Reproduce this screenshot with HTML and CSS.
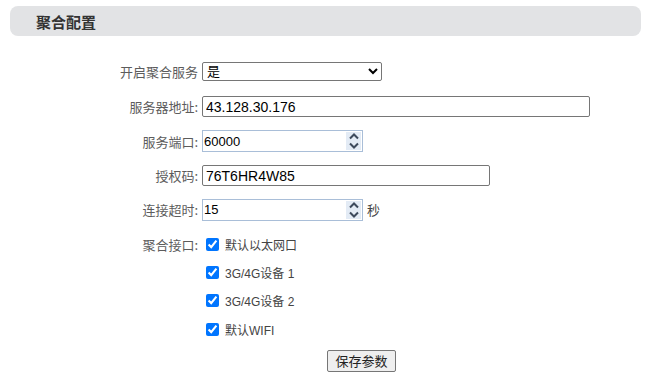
FILE: index.html
```html
<!DOCTYPE html>
<html lang="zh-CN">
<head>
    <meta charset="UTF-8">
    <meta name="viewport" content="width=device-width, initial-scale=1.0">
    <title>聚合配置</title>
    <link rel="stylesheet" href="styles.css">
</head>
<body>
    <div class="panel-title">
        <h2>聚合配置</h2>
    </div>

    <form class="config-form">
        <div class="row">
            <label class="field-label" for="enable">开启聚合服务</label>
            <select id="enable" class="select-box">
                <option selected>是</option>
                <option>否</option>
            </select>
        </div>

        <div class="row">
            <label class="field-label" for="server">服务器地址:</label>
            <input type="text" id="server" class="text-box wide" value="43.128.30.176">
        </div>

        <div class="row row-tight">
            <label class="field-label" for="port">服务端口:</label>
            <div class="number-box">
                <input type="number" id="port" value="60000">
                <span class="spinner">
                    <svg width="10" height="7" viewBox="0 0 10 7"><path d="M1 5.5 L5 1.5 L9 5.5" fill="none" stroke="#3d4a5c" stroke-width="2"/></svg>
                    <svg width="10" height="7" viewBox="0 0 10 7"><path d="M1 1.5 L5 5.5 L9 1.5" fill="none" stroke="#3d4a5c" stroke-width="2"/></svg>
                </span>
            </div>
        </div>

        <div class="row">
            <label class="field-label" for="auth">授权码:</label>
            <input type="text" id="auth" class="text-box medium" value="76T6HR4W85">
        </div>

        <div class="row row-loose">
            <label class="field-label" for="timeout">连接超时:</label>
            <div class="number-box">
                <input type="number" id="timeout" value="15">
                <span class="spinner">
                    <svg width="10" height="7" viewBox="0 0 10 7"><path d="M1 5.5 L5 1.5 L9 5.5" fill="none" stroke="#3d4a5c" stroke-width="2"/></svg>
                    <svg width="10" height="7" viewBox="0 0 10 7"><path d="M1 1.5 L5 5.5 L9 1.5" fill="none" stroke="#3d4a5c" stroke-width="2"/></svg>
                </span>
            </div>
            <span class="unit">秒</span>
        </div>

        <div class="row check-row">
            <span class="field-label">聚合接口:</span>
            <label class="check"><input type="checkbox" checked><span>默认以太网口</span></label>
        </div>
        <div class="row check-row">
            <span class="field-label"></span>
            <label class="check"><input type="checkbox" checked><span>3G/4G设备 1</span></label>
        </div>
        <div class="row check-row">
            <span class="field-label"></span>
            <label class="check"><input type="checkbox" checked><span>3G/4G设备 2</span></label>
        </div>
        <div class="row check-row">
            <span class="field-label"></span>
            <label class="check"><input type="checkbox" checked><span>默认WIFI</span></label>
        </div>

        <div class="row button-row">
            <span class="field-label"></span>
            <button type="button" class="save-btn">保存参数</button>
        </div>
    </form>
</body>
</html>
```

FILE: styles.css
```css
body {
    margin: 0;
    background: #fff;
    font-family: "Liberation Sans", Arial, "Noto Sans CJK SC", sans-serif;
}

.panel-title {
    margin: 6px 12px 0 10px;
    height: 30px;
    background-color: #e2e3e5;
    border-radius: 8px;
    display: flex;
    align-items: center;
    padding-left: 26px;
}

.panel-title h2 {
    margin: 0;
    font-size: 15px;
    font-weight: bold;
    color: #333;
    font-family: "Noto Sans CJK SC", sans-serif;
}

.config-form {
    padding-top: 18px;
}

.row {
    display: flex;
    align-items: center;
    height: 35px;
}

.row-tight {
    height: 34px;
}

.row-loose {
    margin-top: -1px;
    margin-bottom: 3px;
}

.field-label {
    width: 202px;
    flex-shrink: 0;
    text-align: right;
    padding-right: 4px;
    box-sizing: border-box;
    font-family: "Noto Sans CJK SC", sans-serif;
    font-size: 13px;
    color: #5c5c5c;
}

.select-box {
    width: 180px;
    height: 19px;
    padding: 0;
    border: 1px solid #767676;
    border-radius: 2px;
    font-family: "Liberation Sans", Arial, "Noto Sans CJK SC", sans-serif;
    font-size: 13px;
    line-height: 17px;
    color: #000;
    background: #fff;
}

.text-box {
    height: 21px;
    padding: 0 3px;
    border: 1px solid #767676;
    border-radius: 2px;
    box-sizing: border-box;
    font-family: "Liberation Sans", Arial, sans-serif;
    font-size: 14px;
    color: #000;
}

.text-box.wide {
    width: 388px;
}

.text-box.medium {
    width: 288px;
}

.number-box {
    width: 161px;
    height: 22px;
    border: 1px solid #a9bed8;
    box-sizing: border-box;
    display: flex;
    align-items: stretch;
    background: #fff;
}

.number-box input {
    flex: 1;
    min-width: 0;
    border: none;
    padding: 0 0 0 1px;
    font-family: "Liberation Sans", Arial, sans-serif;
    font-size: 13px;
    color: #000;
    outline: none;
    -moz-appearance: textfield;
}

.number-box input::-webkit-inner-spin-button,
.number-box input::-webkit-outer-spin-button {
    -webkit-appearance: none;
    margin: 0;
}

.spinner {
    width: 15px;
    margin: 1px 1px 1px 0;
    background: #e3ebf5;
    display: flex;
    flex-direction: column;
    align-items: center;
    justify-content: space-around;
}

.unit {
    margin-left: 4px;
    font-family: "Noto Sans CJK SC", sans-serif;
    font-size: 13px;
    color: #444;
}

.check-row {
    height: 28.3px;
}

.check {
    display: flex;
    align-items: center;
    font-family: "Liberation Sans", Arial, "Noto Sans CJK SC", sans-serif;
    font-size: 12px;
    color: #444;
}

.check input {
    margin: 0 3px 0 4px;
    width: 13px;
    height: 13px;
}

.check span {
    padding-left: 3px;
}

.button-row {
    height: 35px;
}

.save-btn {
    margin-left: 125px;
    width: 69px;
    height: 22px;
    padding: 0;
    font-family: "Noto Sans CJK SC", sans-serif;
    font-size: 13px;
    color: #222;
    background: #efefef;
    border: 1px solid #767676;
    border-radius: 2px;
}
```
